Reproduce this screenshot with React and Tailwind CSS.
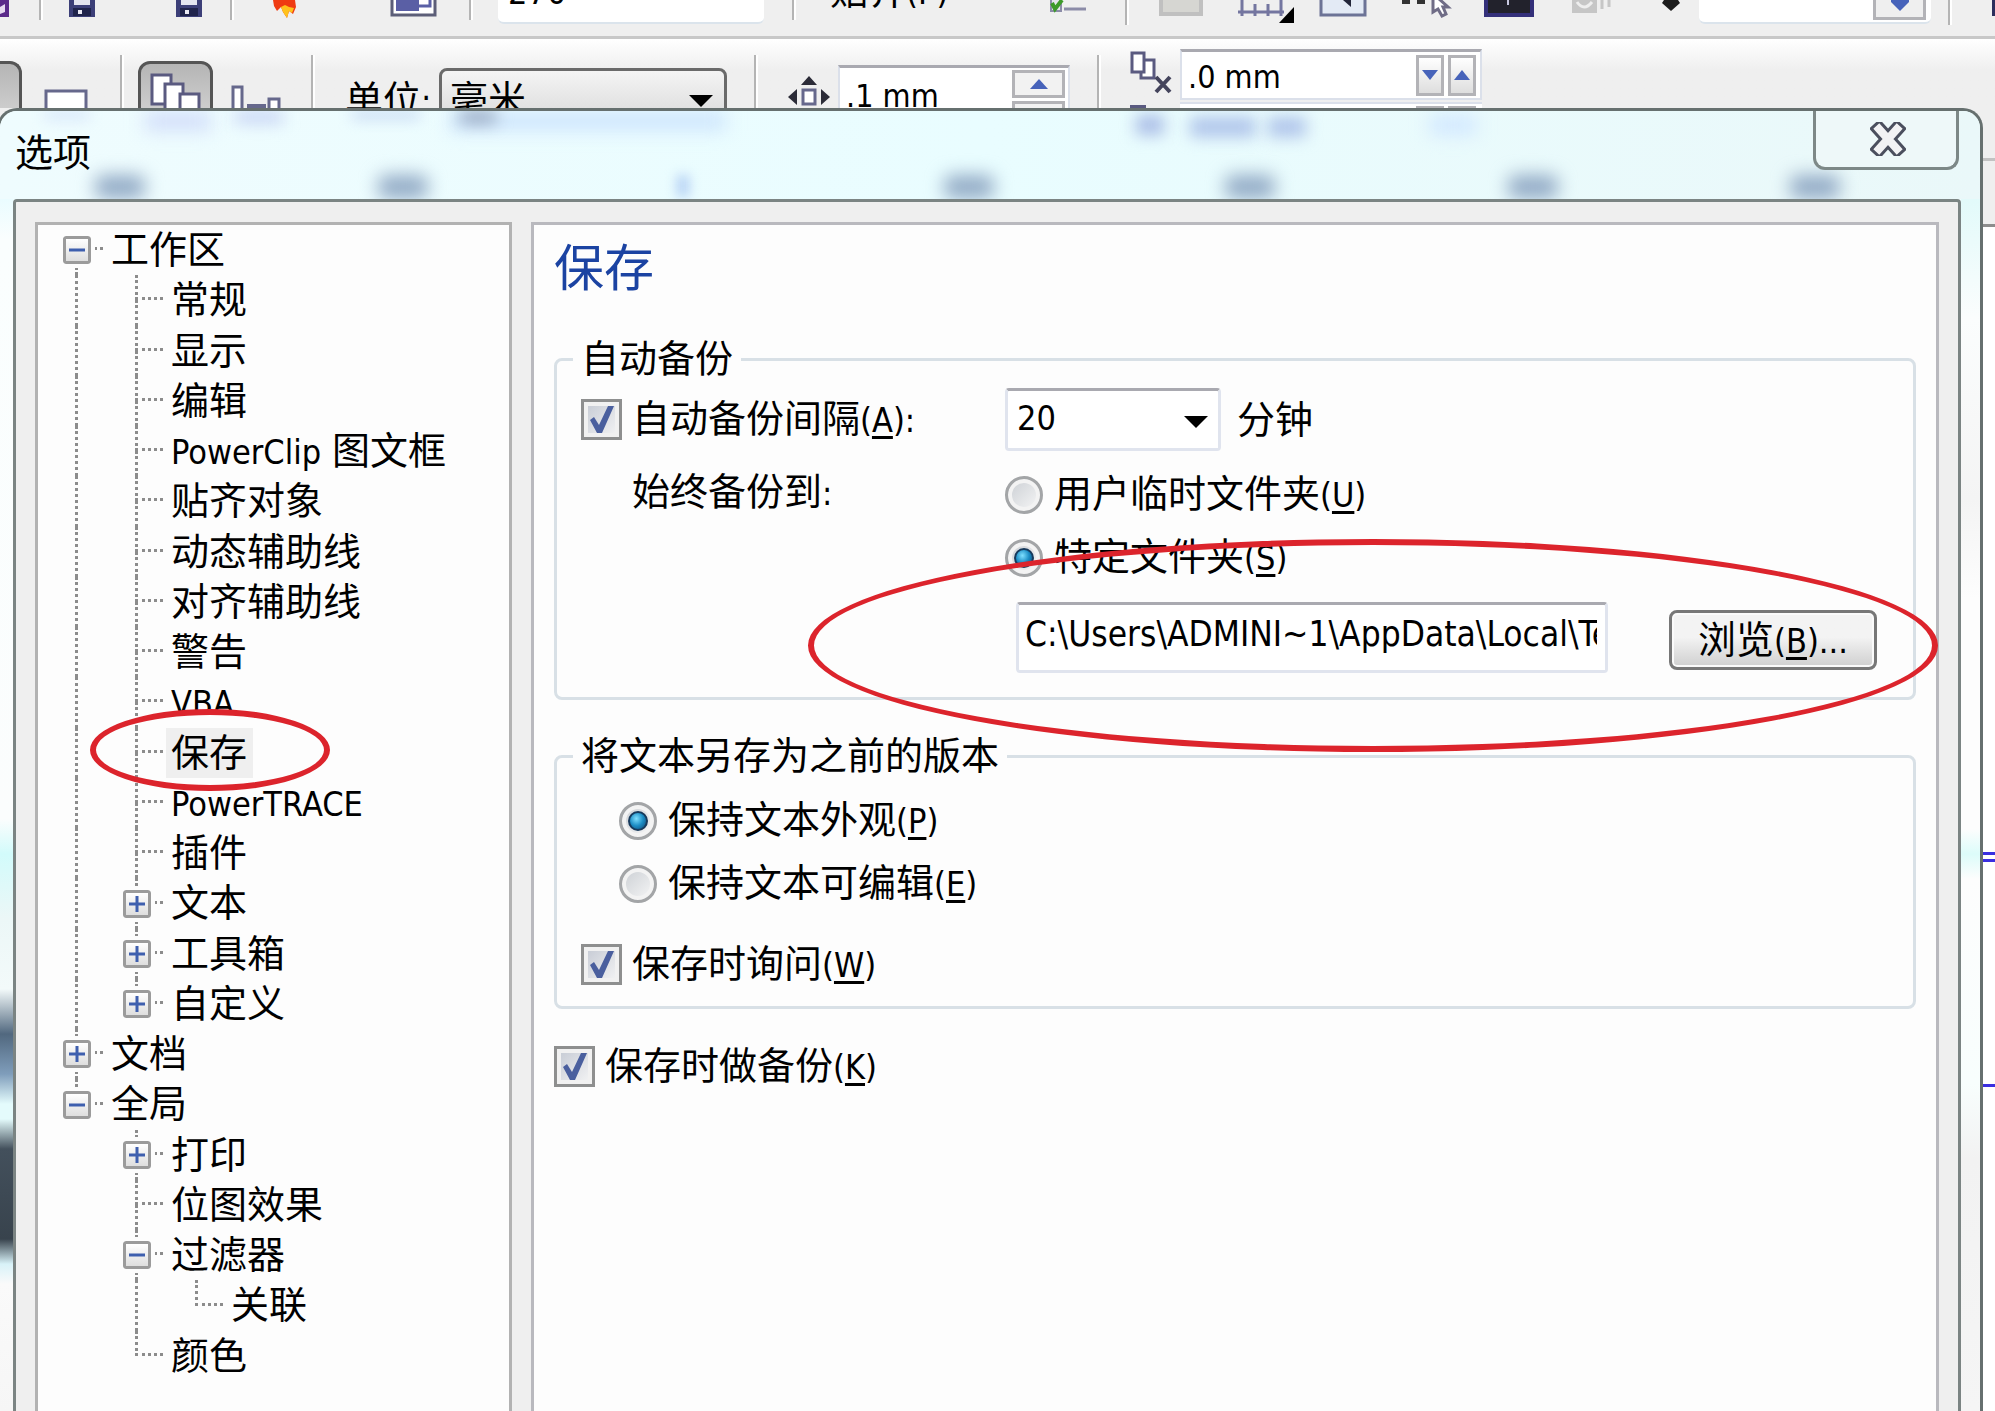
import React from "react";

/* ---------- shared pieces ---------- */

function Latin({ children }) {
  return <span className="text-[34px]">{children}</span>;
}

function Key({ k, after = "" }) {
  return (
    <span className="text-[34px]">
      (<span className="underline decoration-[3px] underline-offset-[4px]">{k}</span>){after}
    </span>
  );
}

function Check({ id, children }) {
  return (
    <label htmlFor={id} className="flex h-[63px] items-center gap-[10px]">
      <span className="relative flex size-[41px] shrink-0">
        <input
          id={id}
          type="checkbox"
          defaultChecked
          className="peer size-full appearance-none border-[3px] border-[#8e8f8f] bg-linear-to-br from-[#c3c8d2] to-[#f6f6f6] shadow-[inset_0_0_0_4px_#f1f1f1]"
        />
        <svg viewBox="0 0 41 41" className="pointer-events-none absolute inset-0 hidden peer-checked:block" aria-hidden="true">
          <path d="M9 21 L13 18 L18 26 L27 7 L33 7 L21 34 L16 34 Z" fill="#4a5f9e" />
        </svg>
      </span>
      <span>{children}</span>
    </label>
  );
}

function Radio({ id, name, checked, children }) {
  return (
    <label htmlFor={id} className="flex h-[63px] items-center gap-[11px]">
      <span className="relative flex size-[38px] shrink-0">
        <input
          id={id}
          name={name}
          type="radio"
          defaultChecked={checked}
          className="peer size-full appearance-none rounded-full border-[3px] border-[#a3a5a7] bg-linear-to-br from-[#c9cdd2] to-[#f8f8f8] shadow-[inset_0_0_0_4px_#f3f3f3]"
        />
        <span className="pointer-events-none absolute inset-[9px] hidden rounded-full border-2 border-[#173a5c] bg-radial-[at_40%_35%] from-[#7fe0ff] via-[#1b8cc4] to-[#10436e] peer-checked:block" />
      </span>
      <span>{children}</span>
    </label>
  );
}

/* ---------- tree ---------- */

// guides: "bar" = line runs through, "none" = blank; node: plus | minus | leaf
const rows = [
  { text: "工作区", guides: [], node: "minus", first: true },
  { text: "常规", guides: ["bar"], node: "leaf" },
  { text: "显示", guides: ["bar"], node: "leaf" },
  { text: "编辑", guides: ["bar"], node: "leaf" },
  { latin: "PowerClip", text: " 图文框", guides: ["bar"], node: "leaf" },
  { text: "贴齐对象", guides: ["bar"], node: "leaf" },
  { text: "动态辅助线", guides: ["bar"], node: "leaf" },
  { text: "对齐辅助线", guides: ["bar"], node: "leaf" },
  { text: "警告", guides: ["bar"], node: "leaf" },
  { latin: "VBA", text: "", guides: ["bar"], node: "leaf" },
  { text: "保存", guides: ["bar"], node: "leaf", selected: true },
  { latin: "PowerTRACE", text: "", guides: ["bar"], node: "leaf" },
  { text: "插件", guides: ["bar"], node: "leaf" },
  { text: "文本", guides: ["bar"], node: "plus" },
  { text: "工具箱", guides: ["bar"], node: "plus" },
  { text: "自定义", guides: ["bar"], node: "plus", end: true },
  { text: "文档", guides: [], node: "plus" },
  { text: "全局", guides: [], node: "minus", end: true },
  { text: "打印", guides: ["none"], node: "plus" },
  { text: "位图效果", guides: ["none"], node: "leaf" },
  { text: "过滤器", guides: ["none"], node: "minus" },
  { text: "关联", guides: ["none", "bar"], node: "leaf", end: true },
  { text: "颜色", guides: ["none"], node: "leaf", end: true },
];

function Expander({ open }) {
  return (
    <button
      type="button"
      aria-label={open ? "折叠" : "展开"}
      className="absolute top-1/2 left-[17px] flex size-[28px] -translate-y-1/2 items-center justify-center rounded-[3px] border-[3px] border-[#9b9b9b] bg-linear-to-b from-white to-[#dedede] outline-4 outline-[#fdfdfd]"
    >
      <svg viewBox="0 0 16 16" className="size-4" aria-hidden="true">
        <path d={open ? "M0 8H16" : "M0 8H16M8 0V16"} stroke="#3e5fae" strokeWidth="3" />
      </svg>
    </button>
  );
}

function Guide({ kind }) {
  return (
    <span className="flex w-[60px] shrink-0 self-stretch pl-[29px]">
      {kind === "bar" && <span className="border-l-[3px] border-dotted border-[#8c8c8c]" />}
    </span>
  );
}

function TreeRow({ row }) {
  return (
    <li className="relative flex items-center">
      {row.guides.map((g, i) => (
        <Guide key={i} kind={g} />
      ))}
      <span className="relative grid w-[60px] shrink-0 grid-rows-2 self-stretch pr-[3px] pl-[29px]">
        <span
          className={
            row.first
              ? "border-b-[3px] border-dotted border-[#8c8c8c]"
              : "border-b-[3px] border-l-[3px] border-dotted border-[#8c8c8c]"
          }
        />
        <span className={row.end ? "" : "border-l-[3px] border-dotted border-[#8c8c8c]"} />
        {(row.node === "plus" || row.node === "minus") && <Expander open={row.node === "minus"} />}
      </span>
      <a
        href="#"
        className={
          row.selected
            ? "h-full bg-[#efefef] pr-[6px] pl-[5px] leading-[50px] whitespace-pre"
            : "h-full pr-[6px] pl-[5px] leading-[50px] whitespace-pre"
        }
      >
        {row.latin && <Latin>{row.latin}</Latin>}
        {row.text}
      </a>
      {row.selected && (
        <span className="pointer-events-none absolute -top-[19px] left-[44px] z-10 h-[82px] w-[240px] rounded-[50%] border-[6px] border-[#dc242c]" />
      )}
    </li>
  );
}

/* ---------- application tool bars ---------- */

function Sep({ className }) {
  return <span className={"w-[4px] shrink-0 border-l-2 border-[#b4b4b4] bg-white " + className} />;
}

function Floppy({ className }) {
  return (
    <svg viewBox="0 0 26 17" className={"h-[17px] w-[26px] shrink-0 " + className} aria-hidden="true">
      <path d="M0 0H26V17H0Z" fill="#3c3f78" />
      <path d="M5 0H21V5H5Z" fill="#e4e5f0" />
      <path d="M4 8H22V16H4Z" fill="#20244c" />
      <path d="M9 10H13V14H9Z" fill="#e9e9f4" />
    </svg>
  );
}

function TopBar() {
  return (
    <div className="flex h-[39px] shrink-0 items-start overflow-hidden border-b-[3px] border-[#c8c8c8] bg-[#efefef]">
      <svg viewBox="0 0 10 17" className="h-[17px] w-[10px] shrink-0" aria-hidden="true">
        <path d="M0 0H9V17H0Z" fill="#5b2a8a" />
        <path d="M0 7L5 4V12L0 14Z" fill="#e6d9f0" />
      </svg>
      <Sep className="ml-[29px] h-5" />
      <Floppy className="ml-[26px]" />
      <Floppy className="ml-[81px]" />
      <Sep className="ml-[28px] h-5" />
      <svg viewBox="0 0 24 18" className="ml-[39px] h-[18px] w-[24px] shrink-0" aria-hidden="true">
        <path d="M0 0H22L23 7L20 14L16 11L14 18L10 12L8 7L4 11L1 6Z" fill="#ef3b12" />
        <path d="M8 7L12 5L16 7L21 8L19 13L16 11L14 18L10 12Z" fill="#ffc21c" />
      </svg>
      <svg viewBox="0 0 47 17" className="ml-[93px] h-[17px] w-[47px] shrink-0" aria-hidden="true">
        <path d="M2 -3H45V15H2Z" fill="#fff" stroke="#5c5e78" strokeWidth="3" />
        <path d="M6 0H29V11H6Z" fill="#5a5fa5" />
        <path d="M28 6H40V0" fill="none" stroke="#5a5fa5" strokeWidth="3" />
      </svg>
      <Sep className="ml-[32px] h-5" />
      <div className="ml-[25px] flex h-6 w-[266px] shrink-0 items-end rounded-b-md border-b-2 border-[#dbe4ec] bg-white pb-1 pl-[10px]">
        <input aria-label="数值" defaultValue="270" className="h-10 w-full bg-transparent pb-3 text-[34px] leading-8 outline-none" />
      </div>
      <Sep className="ml-[28px] h-5" />
      <button type="button" className="ml-[34px] flex h-[14px] w-[120px] shrink-0 items-end overflow-hidden leading-[44px] whitespace-nowrap">
        <span className="block">
          贴齐<Latin>(P)</Latin>
        </span>
      </button>
      <svg viewBox="0 0 38 14" className="ml-[99px] h-[14px] w-[38px] shrink-0" aria-hidden="true">
        <path d="M2 0V11H12V0" fill="#e6e6ee" stroke="#8c8ca8" strokeWidth="2" />
        <path d="M3 3L6 9L13 0" fill="none" stroke="#3d9a2a" strokeWidth="4" />
        <path d="M15 9H37" stroke="#8c8ca8" strokeWidth="3" />
      </svg>
      <Sep className="ml-[38px] h-[25px]" />
      <svg viewBox="0 0 44 17" className="ml-[30px] h-[17px] w-[44px] shrink-0" aria-hidden="true">
        <path d="M2 -3H42V14H2Z" fill="#d6d6d2" stroke="#c0c0c0" strokeWidth="4" />
      </svg>
      <svg viewBox="0 0 58 24" className="ml-[35px] h-6 w-[58px] shrink-0" aria-hidden="true">
        <path d="M0 12H46M4 0V16M17 4V16M30 4V16M43 0V16" stroke="#7476a0" strokeWidth="3" />
        <path d="M41 23L56 7V23Z" fill="#000" />
      </svg>
      <svg viewBox="0 0 48 17" className="ml-[23px] h-[17px] w-[48px] shrink-0" aria-hidden="true">
        <path d="M2 -3H46V15H2Z" fill="#e3eaf5" stroke="#6c7396" strokeWidth="3" />
        <path d="M24 0H32V7Z" fill="#23263a" />
      </svg>
      <svg viewBox="0 0 50 18" className="ml-[35px] h-[18px] w-[50px] shrink-0" aria-hidden="true">
        <path d="M0 0H8V4H0ZM15 0H23V4H15Z" fill="#333" />
        <path d="M31 -4V12L36 9L40 16L44 14L41 7H46L36 -2Z" fill="#fff" stroke="#6f6c86" strokeWidth="3" />
      </svg>
      <svg viewBox="0 0 50 17" className="ml-[32px] h-[17px] w-[50px] shrink-0" aria-hidden="true">
        <path d="M0 0H50V17H0Z" fill="#34307a" />
        <path d="M4 0H46V13H4Z" fill="#22222c" />
        <path d="M24 0V5" stroke="#c8c8e0" strokeWidth="2" />
      </svg>
      <svg viewBox="0 0 40 14" className="ml-[38px] h-[14px] w-[40px] shrink-0" aria-hidden="true">
        <path d="M0 0H25V13H0Z" fill="#c6c6c6" />
        <path d="M5 2Q12 12 20 2" fill="none" stroke="#eee" strokeWidth="3" />
        <path d="M30 0V9M37 0V7" stroke="#c6c6c6" strokeWidth="3" />
      </svg>
      <svg viewBox="0 0 18 11" className="ml-[50px] h-[11px] w-[18px] shrink-0" aria-hidden="true">
        <path d="M2 0H16L18 3L9 11L0 3Z" fill="#1c1c1c" />
      </svg>
      <div className="ml-[19px] flex h-6 w-[232px] shrink-0 justify-end rounded-b-md border-b-2 border-[#dbe4ec] bg-white pr-[5px]">
        <button type="button" aria-label="展开列表" className="flex h-5 w-[53px] justify-center border-[3px] border-t-0 border-[#b3b3b7] bg-[#efefef]">
          <svg viewBox="0 0 18 11" className="h-[11px] w-[18px]" aria-hidden="true">
            <path d="M0 0H18V2L9 11L0 2Z" fill="#4763ba" />
          </svg>
        </button>
      </div>
      <Sep className="ml-[17px] h-[25px]" />
      <span className="ml-auto h-4 w-[3px] bg-[#2b2d5c]" />
    </div>
  );
}

function PropertyBar() {
  return (
    <div className="flex h-[69px] shrink-0 items-start overflow-hidden bg-linear-to-b from-white to-[#efefef] to-45%">
      <span className="mt-[22px] h-20 w-[22px] shrink-0 rounded-tr-xl border-t-[3px] border-r-[3px] border-[#555] bg-linear-to-b from-[#b5b5b5] to-[#dedede]" />
      <svg viewBox="0 0 44 19" className="mt-[50px] ml-[22px] h-[19px] w-[44px] shrink-0" aria-hidden="true">
        <path d="M2 22V2H42V22" fill="#fff" stroke="#66688c" strokeWidth="3" />
      </svg>
      <Sep className="mt-4 ml-[32px] h-14" />
      <button
        type="button"
        aria-label="所有页面"
        className="mt-[22px] ml-[14px] h-20 w-[75px] shrink-0 rounded-xl border-[3px] border-[#555] bg-linear-to-b from-[#b5b5b5] to-[#dedede]"
      >
        <svg viewBox="0 0 69 74" className="h-[74px] w-[69px]" aria-hidden="true">
          <g fill="#fff" stroke="#5a5a80" strokeWidth="3">
            <path d="M11 11H30V40H11Z" />
            <path d="M24 20H42V60H24Z" />
            <path d="M39 30H58V60H39Z" />
          </g>
        </svg>
      </button>
      <svg viewBox="0 0 52 24" className="mt-[45px] ml-[17px] h-6 w-[52px] shrink-0" aria-hidden="true">
        <g fill="#fff" stroke="#66688c" strokeWidth="3">
          <path d="M3 28V3H12V28" />
          <path d="M39 28V15H49V28" />
        </g>
        <path d="M17 20H36V24H17Z" fill="#66688c" />
      </svg>
      <Sep className="mt-4 ml-[29px] h-14" />
      <label htmlFor="unit" className="mt-[39px] ml-[30px] w-[94px] shrink-0 leading-[44px] whitespace-nowrap">
        单位<Latin>:</Latin>
      </label>
      <div className="relative mt-[29px] shrink-0">
        <select
          id="unit"
          className="h-20 w-[288px] appearance-none rounded-lg border-[3px] border-[#6a6a6a] bg-linear-to-b from-[#f4f4f4] to-[#cfcfcf] pb-[16px] pl-2 leading-[44px]"
        >
          <option>毫米</option>
        </select>
        <svg viewBox="0 0 24 12" className="pointer-events-none absolute top-[27px] right-[14px] h-3 w-6" aria-hidden="true">
          <path d="M0 0H24L12 12Z" fill="#000" />
        </svg>
      </div>
      <Sep className="mt-4 ml-[27px] h-14" />
      <svg viewBox="0 0 42 32" className="mt-[37px] ml-[30px] h-8 w-[42px] shrink-0" aria-hidden="true">
        <path d="M13 9L21 0L29 9Z M0 21L9 13V29Z M42 21L33 13V29Z" fill="#2c2c38" />
        <path d="M15 14H27V28H15Z" fill="#fff" stroke="#66688c" strokeWidth="3" />
      </svg>
      <div className="mt-[26px] ml-2 flex h-20 w-[232px] shrink-0 justify-between border-x-2 border-t-[3px] border-x-[#dbe0ea] border-t-[#a9a9b0] bg-white pr-[3px] pl-[6px]">
        <input aria-label="微调距离" defaultValue=".1 mm" className="mt-[6px] h-11 w-[140px] bg-transparent text-[32px] outline-none" />
        <span className="flex flex-col gap-[3px] pt-[2px]">
          <button type="button" aria-label="增大" className="flex h-[28px] w-[53px] items-center justify-center border-[3px] border-[#b3b3b7] bg-[#f2f2f2]">
            <svg viewBox="0 0 18 10" className="h-[10px] w-[18px]" aria-hidden="true">
              <path d="M0 10H18L9 0Z" fill="#4763ba" />
            </svg>
          </button>
          <button type="button" aria-label="减小" className="h-[28px] w-[53px] border-[3px] border-[#b3b3b7] bg-[#f2f2f2]" />
        </span>
      </div>
      <Sep className="mt-4 ml-[27px] h-14" />
      <svg viewBox="0 0 42 57" className="mt-[12px] ml-[29px] h-[57px] w-[42px] shrink-0" aria-hidden="true">
        <g fill="#fff" stroke="#5a5a80" strokeWidth="3">
          <path d="M11 9H24V27H11Z" />
          <path d="M2 2H14V21H2Z" />
        </g>
        <path d="M26 26L40 41M40 26L26 41" stroke="#44445c" strokeWidth="4" />
        <path d="M0 54H16V57H0Z" fill="#5a5a80" />
      </svg>
      <div className="mt-[10px] ml-2 flex w-[302px] shrink-0 flex-col gap-[2px]">
        <div className="flex h-[51px] items-center justify-between border-2 border-t-[3px] border-[#dbe0ea] border-t-[#a9a9b0] bg-white pr-1 pl-[6px]">
          <input aria-label="再制距离" defaultValue=".0 mm" className="h-11 w-[160px] bg-transparent pt-[3px] text-[32px] outline-none" />
          <span className="flex gap-1">
            <button type="button" aria-label="减小" className="flex h-[41px] w-[28px] items-center justify-center border-[3px] border-[#b3b3b7] bg-linear-to-b from-white to-[#dedede]">
              <svg viewBox="0 0 16 10" className="h-[10px] w-4" aria-hidden="true">
                <path d="M0 0H16L8 10Z" fill="#4763ba" />
              </svg>
            </button>
            <button type="button" aria-label="增大" className="flex h-[41px] w-[28px] items-center justify-center border-[3px] border-[#b3b3b7] bg-linear-to-b from-white to-[#dedede]">
              <svg viewBox="0 0 16 10" className="h-[10px] w-4" aria-hidden="true">
                <path d="M0 10H16L8 0Z" fill="#4763ba" />
              </svg>
            </button>
          </span>
        </div>
        <div className="flex h-10 justify-end gap-1 border-t-2 border-[#dbe0ea] bg-white pt-[2px] pr-[6px]">
          <span className="w-[28px] bg-[#b3b3b7]" />
          <span className="w-[28px] bg-[#b3b3b7]" />
        </div>
      </div>
    </div>
  );
}

/* ---------- dialog ---------- */

// soft shapes of the window behind that shine through the title glass
function GlassShapes() {
  const ruler = "absolute top-[64px] h-[24px] w-[50px] rounded-lg bg-[#93abc6] blur-[9px]";
  return (
    <div className="pointer-events-none absolute inset-0 overflow-hidden" aria-hidden="true">
      <span className={ruler + " left-[95px]"} />
      <span className={ruler + " left-[378px]"} />
      <span className="absolute top-[64px] left-[677px] h-[22px] w-3 bg-[#b4d0f4] blur-[6px]" />
      <span className={ruler + " left-[944px]"} />
      <span className={ruler + " left-[1225px]"} />
      <span className={ruler + " left-[1508px]"} />
      <span className={ruler + " left-[1790px]"} />
      <span className="absolute top-0 left-[45px] h-2 w-[44px] bg-[#d2e2fa] blur-[7px]" />
      <span className="absolute top-0 left-[145px] h-5 w-[66px] bg-[#d3dffa] blur-[9px]" />
      <span className="absolute top-0 left-[235px] h-3 w-[48px] bg-[#c4d0f4] blur-[8px]" />
      <span className="absolute top-0 left-[352px] h-2 w-[68px] bg-[#c4d6f2] blur-[7px]" />
      <span className="absolute top-0 left-[450px] h-5 w-[276px] bg-[#cfe6fd] blur-[9px]" />
      <span className="absolute top-0 left-[460px] h-3 w-[36px] bg-[#93a3bc] blur-[8px]" />
      <span className="absolute top-[4px] left-[1136px] h-5 w-[28px] bg-[#a9bce6] blur-[8px]" />
      <span className="absolute top-[6px] left-[1190px] h-5 w-[66px] bg-[#afc4ea] blur-[8px]" />
      <span className="absolute top-[6px] left-[1268px] h-5 w-[38px] bg-[#afc4ea] blur-[8px]" />
      <span className="absolute top-[4px] left-[1430px] h-5 w-[46px] bg-[#d2e8ff] blur-[9px]" />
    </div>
  );
}

function SavePage() {
  return (
    <main className="flex-1 border-[3px] border-b-0 border-[#b9b9be] bg-[#fdfdfd] px-5 pt-[14px]">
      <h1 className="text-[50px] leading-[60px] text-[#1b43a2]">保存</h1>

      <fieldset className="mt-[38px] rounded-lg border-[3px] border-[#d8e0e6] px-4 pb-[24px]">
        <legend className="px-2 leading-[44px]">自动备份</legend>
        <div className="grid grid-cols-[424px_1fr] pt-[7px] pr-5 pl-2">
          <Check id="auto">
            自动备份间隔<Key k="A" after=":" />
          </Check>
          <div className="flex h-[63px] items-center gap-4">
            <span className="relative">
              <select
                aria-label="自动备份间隔"
                className="h-[63px] w-[216px] appearance-none rounded-sm border-[3px] border-[#e0e4ee] border-t-[#a9a9b0] bg-white pb-1 pl-[9px] text-[34px]"
              >
                <option>20</option>
              </select>
              <svg viewBox="0 0 24 12" className="pointer-events-none absolute top-[28px] right-[13px] h-3 w-6" aria-hidden="true">
                <path d="M0 0H24L12 12Z" fill="#000" />
              </svg>
            </span>
            <span>分钟</span>
          </div>

          <p className="mt-3 pl-[51px] leading-[58px]">
            始终备份到<Latin>:</Latin>
          </p>
          <div className="mt-3">
            <Radio id="tmp" name="dest">
              用户临时文件夹<Key k="U" />
            </Radio>
            <Radio id="spec" name="dest" checked>
              特定文件夹<Key k="S" />
            </Radio>
            <div className="relative mt-[13px] flex items-start gap-[61px] pl-[11px]">
              <div className="flex h-[71px] min-w-0 flex-1 rounded-sm border-[3px] border-[#e0e4ee] border-t-[#a9a9b0] bg-white pr-2 pb-2 pl-[6px]">
                <input
                  aria-label="备份文件夹"
                  defaultValue="C:\Users\ADMINI~1\AppData\Local\Temp\"
                  className="w-full min-w-0 bg-transparent text-[35px] outline-none"
                />
              </div>
              <button
                type="button"
                className="mt-2 h-[60px] w-[208px] shrink-0 rounded-lg border-[3px] border-[#777] bg-linear-to-b from-[#f3f3f3] from-45% to-[#cfcfcf] leading-[44px] whitespace-nowrap shadow-[inset_0_0_0_2px_#fafafa]"
              >
                浏览<Key k="B" after="..." />
              </button>
              <span className="pointer-events-none absolute -top-[63px] -right-[61px] -left-[197px] z-10 h-[213px] rounded-[50%] border-[6px] border-[#dc242c]" />
            </div>
          </div>
        </div>
      </fieldset>

      <fieldset className="mt-[34px] rounded-lg border-[3px] border-[#d8e0e6] px-4 pb-[10px]">
        <legend className="px-2 leading-[44px]">将文本另存为之前的版本</legend>
        <div className="pt-[11px] pl-2">
          <div className="pl-[38px]">
            <Radio id="look" name="ver" checked>
              保持文本外观<Key k="P" />
            </Radio>
            <Radio id="edit" name="ver">
              保持文本可编辑<Key k="E" />
            </Radio>
          </div>
          <div className="mt-[18px]">
            <Check id="ask">
              保存时询问<Key k="W" />
            </Check>
          </div>
        </div>
      </fieldset>

      <div className="mt-[26px]">
        <Check id="bak">
          保存时做备份<Key k="K" />
        </Check>
      </div>
    </main>
  );
}

export default function App() {
  return (
    <div className="flex h-screen flex-col overflow-hidden bg-[#efefef] font-['DejaVu_Sans_Condensed','Noto_Sans_CJK_SC',sans-serif] text-[38px] leading-[44px] text-black">
      <TopBar />
      <PropertyBar />
      <div className="flex min-h-0 flex-1">
        <section
          role="dialog"
          aria-label="选项"
          className="-ml-[3px] flex min-w-0 flex-1 flex-col overflow-hidden rounded-t-[20px] border-x-[3px] border-t-[3px] border-[#66706f] bg-[#effdfd]"
        >
          <header className="relative flex h-[88px] shrink-0 items-start justify-between bg-linear-to-r from-[#effcfe] via-[#e9fdff] to-[#eaf8f9] pr-[21px] pl-[15px]">
            <GlassShapes />
            <h2 className="relative mt-5 leading-[44px]">选项</h2>
            <button
              type="button"
              aria-label="关闭"
              className="relative flex h-[59px] w-[146px] items-center justify-center rounded-b-xl border-x-[3px] border-b-[3px] border-[#7d8887] bg-[#eef8f9] pl-1"
            >
              <svg viewBox="0 0 36 34" className="h-[34px] w-[36px]" aria-hidden="true">
                <path d="M9 7L27 27M27 7L9 27" stroke="#4b4f5e" strokeWidth="14" strokeLinecap="square" strokeLinejoin="round" />
                <path d="M9 7L27 27M27 7L9 27" stroke="#f2f2f4" strokeWidth="8" strokeLinecap="square" />
              </svg>
            </button>
          </header>

          <div className="flex min-h-0 flex-1">
            <span className="w-[13px] shrink-0 bg-[linear-gradient(180deg,#eafcff_0px,#fafefe_40px,#fbfdfd_620px,#d2fbfb_655px,#ecf7f7_720px,#f3fafa_790px,#51687f_835px,#7f9dbb_875px,#e4fbfc_905px,#e4fbfc_920px,#43505c_950px,#38434d_1040px,#d8f2f8_1065px,#fafafa_1085px,#f6f6f6_100%)]" />
            <div className="flex min-w-0 flex-1 gap-[19px] rounded-t-sm border-x-[3px] border-t-[3px] border-[#7b8483] bg-[#efefef] pt-5 pr-[19px] pl-[19px]">
              <nav aria-label="选项分类" className="w-[477px] shrink-0 border-[3px] border-b-0 border-[#b2b2b2] bg-[#fdfdfd] pl-2">
                <ul className="grid h-[1156px] auto-rows-fr">
                  {rows.map((r, i) => (
                    <TreeRow key={i} row={r} />
                  ))}
                </ul>
              </nav>
              <SavePage />
            </div>
            <span className="w-[19px] shrink-0 bg-[linear-gradient(180deg,#e2fafa_0px,#fbfdfd_120px,#f4f4f4_300px,#fdfdfd_400px,#fdfdfd_630px,#dcfcfa_655px,#fdfdfd_680px,#f8fefd_885px,#f2f2f2_960px,#f5f5f5_100%)]" />
          </div>
        </section>

        {/* edge of the drawing window behind the dialog */}
        <aside className="flex w-3 shrink-0 flex-col" aria-hidden="true">
          <span className="h-[53px] border-b-[3px] border-[#c2c2c2] bg-[#efefef]" />
          <span className="h-[66px] border-b-[3px] border-[#8d8d8d] bg-[#efefef]" />
          <span className="flex flex-1 flex-col bg-white pt-[625px]">
            <span className="h-[3px] bg-[#3a2ee0]" />
            <span className="mt-[4px] h-[3px] bg-[#3a2ee0]" />
            <span className="mt-[222px] h-[3px] bg-[#3a2ee0]" />
          </span>
        </aside>
      </div>
    </div>
  );
}
